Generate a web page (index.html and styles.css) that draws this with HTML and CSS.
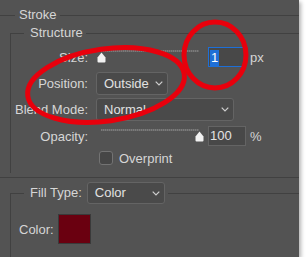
FILE: index.html
```html
<!DOCTYPE html>
<html lang="en">

<head>
    <meta charset="UTF-8">
    <meta name="viewport" content="width=device-width, initial-scale=1.0">
    <title>Stroke</title>
    <link rel="stylesheet" href="styles.css">
</head>

<body>
    <div class="panel">
        <div class="title title-stroke"><span>Stroke</span></div>

        <div class="group">
            <div class="title title-group"><span>Structure</span></div>
            <div class="group-body">
                <div class="row row-slider">
                    <span class="label">Size:</span>
                    <div class="slider">
                        <div class="track"></div>
                        <svg class="thumb" style="left:1px" width="9" height="11" viewBox="0 0 9 11">
                            <path d="M4.5 0.5 L8.5 5.5 L8.5 9.5 Q8.5 10.5 7.5 10.5 L1.5 10.5 Q0.5 10.5 0.5 9.5 L0.5 5.5 Z" fill="#f2f2f2" />
                        </svg>
                    </div>
                    <div class="field field-active"><span class="sel">1</span></div>
                    <span class="unit">px</span>
                </div>

                <div class="row row-select">
                    <span class="label">Position:</span>
                    <div class="select select-pos">
                        <span>Outside</span>
                        <svg class="chevron" width="8" height="5" viewBox="0 0 8 5"><path d="M0.7 0.7 L4 4 L7.3 0.7" /></svg>
                    </div>
                </div>

                <div class="row row-select row-blend">
                    <span class="label">Blend Mode:</span>
                    <div class="select select-blend">
                        <span>Normal</span>
                        <svg class="chevron" width="8" height="5" viewBox="0 0 8 5"><path d="M0.7 0.7 L4 4 L7.3 0.7" /></svg>
                    </div>
                </div>

                <div class="row row-slider row-opacity">
                    <span class="label">Opacity:</span>
                    <div class="slider">
                        <div class="track"></div>
                        <svg class="thumb" style="left:99px" width="9" height="11" viewBox="0 0 9 11">
                            <path d="M4.5 0.5 L8.5 5.5 L8.5 9.5 Q8.5 10.5 7.5 10.5 L1.5 10.5 Q0.5 10.5 0.5 9.5 L0.5 5.5 Z" fill="#f2f2f2" />
                        </svg>
                    </div>
                    <div class="field">100</div>
                    <span class="unit">%</span>
                </div>

                <div class="row row-check">
                    <span class="checkbox"></span>
                    <span>Overprint</span>
                </div>
            </div>
        </div>

        <div class="divider"></div>

        <div class="group group-fill">
            <div class="title title-fill">
                <span>Fill Type:</span>
                <div class="select select-fill">
                    <span>Color</span>
                    <svg class="chevron" width="8" height="5" viewBox="0 0 8 5"><path d="M0.7 0.7 L4 4 L7.3 0.7" /></svg>
                </div>
            </div>
            <div class="group-body fill-body">
                <div class="row row-color">
                    <span class="label-color">Color:</span>
                    <div class="swatch"></div>
                </div>
            </div>
        </div>

        <!-- hand drawn red marks -->
        <svg class="marks" width="299" height="257" viewBox="0 0 299 257">
            <ellipse cx="106" cy="85" rx="79" ry="36" transform="rotate(-8 106 85)" />
            <ellipse cx="215" cy="55" rx="31" ry="33" />
        </svg>
    </div>
</body>

</html>
```

FILE: styles.css
```css
body {
    margin: 0;
    background-color: #ffffff;
    font-family: 'Liberation Sans', Arial, sans-serif;
    font-size: 13px;
    color: #d6d6d6;
}

.panel {
    position: relative;
    width: 299px;
    height: 257px;
    background-color: #535353;
    display: flex;
    flex-direction: column;
    overflow: hidden;
    box-shadow: 2px 2px 4px rgba(0, 0, 0, 0.3);
}

/* group titles with a rule on both sides */
.title {
    display: flex;
    height: 16px;
    line-height: 16px;
}

.title::before,
.title::after {
    content: "";
    margin-top: 8px;
    border-top: 1px solid #414141;
}

.title::after {
    flex: 1;
}

.title-stroke {
    margin-top: 7px;
}

.title-stroke::before {
    width: 15px;
}

.title-stroke span {
    padding: 0 3px 0 4px;
}

.group {
    margin-left: 10px;
}

.title-group {
    margin-top: 2px;
}

.title-group::before {
    width: 13px;
    border-left: 1px solid #414141;
}

.title-group span {
    padding: 0 3px 0 6px;
}

.group-body {
    border-left: 1px solid #414141;
    padding-top: 5px;
    padding-bottom: 7px;
}

.row {
    display: flex;
    align-items: center;
}

.label {
    width: 77px;
    text-align: right;
    margin-right: 8px;
}

.row-slider {
    height: 22px;
}

.row-select {
    height: 23px;
    margin-top: 4px;
}

.row-blend {
    margin-top: 3px;
}

.row-opacity {
    margin-top: 4px;
}

.slider {
    position: relative;
    width: 108px;
    align-self: stretch;
}

.track {
    position: absolute;
    top: 4px;
    left: 5px;
    width: 98px;
    height: 2px;
    background: repeating-linear-gradient(90deg, #7a7a7a 0 1px, #666666 1px 2px);
}

.thumb {
    position: absolute;
    top: 6px;
}

.field {
    box-sizing: border-box;
    width: 38px;
    height: 20px;
    margin-left: 4px;
    padding-left: 1px;
    line-height: 18px;
    background-color: #484848;
    border: 1px solid #646464;
    color: #e4e4e4;
}

.field-active {
    border-color: #1d6fd8;
    padding-top: 1px;
}

.sel {
    display: inline-block;
    height: 16px;
    line-height: 16px;
    padding: 0 1px;
    background-color: #1f6fd6;
    color: #ffffff;
}

.unit {
    margin-left: 4px;
}

.select {
    box-sizing: border-box;
    height: 23px;
    display: flex;
    align-items: center;
    justify-content: space-between;
    padding: 0 4px 0 7px;
    background-color: #4a4a4a;
    border: 1px solid #646464;
    border-radius: 3px;
    color: #e2e2e2;
}

.chevron path {
    fill: none;
    stroke: #cfcfcf;
    stroke-width: 1.2;
}

.select-pos {
    width: 72px;
}

.select-blend {
    width: 138px;
}

.row-check {
    height: 16px;
    margin-top: 3px;
    padding-left: 88px;
}

.checkbox {
    box-sizing: border-box;
    width: 14px;
    height: 14px;
    margin-right: 6px;
    background-color: #464646;
    border: 1px solid #737373;
    border-radius: 3px;
}

.divider {
    margin-top: 4px;
    height: 1px;
    background-color: #414141;
}

.group-fill {
    flex: 1;
    display: flex;
    flex-direction: column;
    margin-top: 4px;
}

.title-fill {
    height: 22px;
    line-height: 22px;
}

.title-fill::before {
    margin-top: 11px;
    width: 13px;
    border-left: 1px solid #414141;
}

.title-fill::after {
    margin-top: 11px;
    margin-left: 3px;
}

.title-fill > span {
    padding: 0 5px 0 6px;
}

.select-fill {
    width: 78px;
    height: 22px;
}

.fill-body {
    flex: 1;
    padding-top: 10px;
}

.label-color {
    padding-left: 8px;
}

.swatch {
    box-sizing: border-box;
    width: 33px;
    height: 30px;
    margin-left: 4px;
    background-color: #6a0010;
    border: 1px solid #3a3a3a;
}

.marks {
    position: absolute;
    top: 0;
    left: 0;
    pointer-events: none;
}

.marks ellipse {
    fill: none;
    stroke: #e8000c;
    stroke-width: 5;
}
```
